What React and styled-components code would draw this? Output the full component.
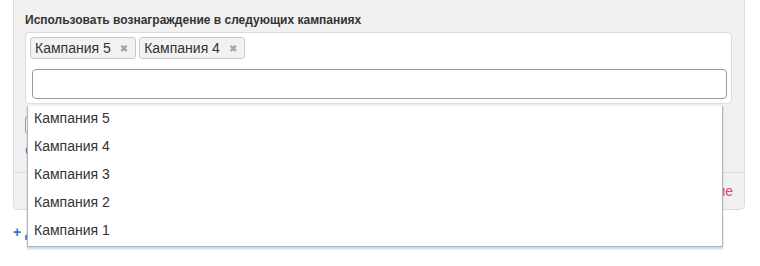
import React from "react"
import styled, { createGlobalStyle } from "styled-components"

/**
 * @brief Global page reset
 **/
const GlobalStyle = createGlobalStyle`
  html, body {
    margin: 0;
    padding: 0;
    background: #ffffff;
    min-height: 266px;
  }
  body {
    font-family: "Liberation Sans", Arial, sans-serif;
    color: #333333;
  }
`

/**
 * @brief Page wrapper
 **/
const Page = styled.div`
  padding: 0 15px 0 13px;
  width: 732px;
  min-height: 266px;
`

/**
 * @brief Reward panel
 **/
const Panel = styled.div`
  background: #f1f1f1;
  border: 1px solid #dcdcdc;
  border-top: none;
  border-radius: 0 0 5px 5px;
`

const PanelBody = styled.div`
  padding: 12px 12px 13px 11px;
  display: flex;
  flex-direction: column;
  align-items: flex-start;
`

const Label = styled.div`
  font-size: 12px;
  line-height: 16px;
  font-weight: 700;
  color: #333333;
  margin-bottom: 4px;
`

/**
 * @brief Multi select (select2 like)
 **/
const SelectWrap = styled.div`
  position: relative;
  align-self: stretch;
`

const SelectBox = styled.div`
  background: #ffffff;
  border: 1px solid #dddddd;
  border-radius: 4px;
  padding: 4px 4px 4px 4px;
  display: flex;
  flex-direction: column;
`

const Tags = styled.div`
  display: flex;
  gap: 3px;
`

const Tag = styled.span`
  display: inline-flex;
  align-items: center;
  height: 20px;
  padding: 0 7px 0 4px;
  background: #f2f2f2;
  border: 1px solid #c9c9c9;
  border-radius: 3px;
  font-size: 14px;
  color: #333333;
`

const TagRemove = styled.span`
  margin-left: 9px;
  font-family: "DejaVu Sans", sans-serif;
  font-size: 10px;
  color: #a3a3a3;
`

const Search = styled.input`
  box-sizing: border-box;
  margin: 10px 0 0 2px;
  width: calc(100% - 2px);
  height: 30px;
  border: 1.5px solid #9a9a9a;
  border-radius: 4px;
  outline: none;
  font: inherit;
`

const Dropdown = styled.ul`
  position: absolute;
  top: calc(100% + 2px);
  left: 2px;
  right: 9px;
  margin: 0;
  padding: 0;
  list-style: none;
  background: #ffffff;
  border: 1px solid #b4b4b4;
  border-top: none;
  box-shadow: 0 2px 2px rgba(110, 160, 220, 0.45);
  z-index: 10;
`

const Option = styled.li`
  padding: 4px 6px 8px 6px;
  font-size: 14px;
  line-height: 16px;
  color: #333333;
`

/**
 * @brief Fields hidden below the dropdown
 **/
const SmallInput = styled.div`
  margin-top: 12px;
  width: 300px;
  height: 16px;
  background: #ffffff;
  border: 1px solid #9a9a9a;
  border-radius: 3px;
`

const LinkText = styled.a`
  margin-top: ${props => props.marginTop ? props.marginTop : "0"};
  font-size: ${props => props.fontSize ? props.fontSize : "13px"};
  line-height: 16px;
  color: ${props => props.color ? props.color : "#2a7cc4"};
  text-decoration: none;
  font-weight: ${props => props.bold ? 700 : 400};
`

const PanelFooter = styled.div`
  border-top: 1px solid #dcdcdc;
  padding: 10px 11px 10px 12px;
  display: flex;
  justify-content: flex-end;
`

const AddRow = styled.div`
  margin-top: 14px;
  display: flex;
`

const campaigns = ["Кампания 5", "Кампания 4", "Кампания 3", "Кампания 2", "Кампания 1"]
const selected = ["Кампания 5", "Кампания 4"]

export default function App() {
  return (
    <>
      <GlobalStyle />
      <Page>
        <Panel>
          <PanelBody>
            <Label>Использовать вознаграждение в следующих кампаниях</Label>
            <SelectWrap>
              <SelectBox>
                <Tags>
                  {selected.map(name => (
                    <Tag key={name}>
                      {name}
                      <TagRemove>✖</TagRemove>
                    </Tag>
                  ))}
                </Tags>
                <Search type="text" />
              </SelectBox>
              <Dropdown>
                {campaigns.map(name => (
                  <Option key={name}>{name}</Option>
                ))}
              </Dropdown>
            </SelectWrap>
            <SmallInput />
            <LinkText marginTop="9px">Создать новую кампанию</LinkText>
          </PanelBody>
          <PanelFooter>
            <LinkText color="#e0466d" fontSize="14px">Удалить вознаграждение</LinkText>
          </PanelFooter>
        </Panel>
        <AddRow>
          <LinkText fontSize="14px" bold>+ Добавить вознаграждение</LinkText>
        </AddRow>
      </Page>
    </>
  )
}
